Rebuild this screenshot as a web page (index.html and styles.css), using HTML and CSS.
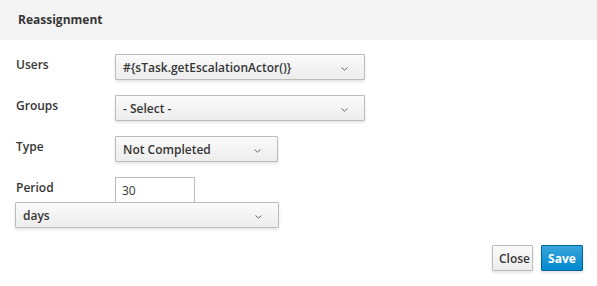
FILE: index.html
```html
<!DOCTYPE html>
<html lang="en">
<head>
    <meta charset="UTF-8">
    <meta name="viewport" content="width=device-width, initial-scale=1.0">
    <title>Reassignment</title>
    <link rel="stylesheet" href="styles.css">
</head>
<body>
    <div class="modal">
        <div class="modal-header">
            <h4 class="modal-title">Reassignment</h4>
        </div>

        <div class="modal-body">
            <div class="form-row">
                <label class="form-label">Users</label>
                <button class="select select-users">
                    <span>#{sTask.getEscalationActor()}</span>
                    <svg class="caret" width="7" height="4" viewBox="0 0 7 4"><path d="M0.5 0.5 L3.5 3.2 L6.5 0.5" fill="none" stroke="#666" stroke-width="1"/></svg>
                </button>
            </div>

            <div class="form-row">
                <label class="form-label">Groups</label>
                <button class="select select-users">
                    <span>- Select -</span>
                    <svg class="caret" width="7" height="4" viewBox="0 0 7 4"><path d="M0.5 0.5 L3.5 3.2 L6.5 0.5" fill="none" stroke="#666" stroke-width="1"/></svg>
                </button>
            </div>

            <div class="form-row">
                <label class="form-label">Type</label>
                <button class="select select-type">
                    <span>Not Completed</span>
                    <svg class="caret" width="7" height="4" viewBox="0 0 7 4"><path d="M0.5 0.5 L3.5 3.2 L6.5 0.5" fill="none" stroke="#666" stroke-width="1"/></svg>
                </button>
            </div>

            <div class="form-row period-row">
                <label class="form-label">Period</label>
                <input class="text-input" type="text" value="30">
            </div>
            <button class="select select-period">
                <span>days</span>
                <svg class="caret" width="7" height="4" viewBox="0 0 7 4"><path d="M0.5 0.5 L3.5 3.2 L6.5 0.5" fill="none" stroke="#666" stroke-width="1"/></svg>
            </button>
        </div>

        <div class="modal-footer">
            <button class="btn btn-default">Close</button>
            <button class="btn btn-primary">Save</button>
        </div>
    </div>
</body>
</html>
```

FILE: styles.css
```css
* {
    margin: 0;
    padding: 0;
    box-sizing: border-box;
}

body {
    font-family: 'Open Sans', 'Liberation Sans', sans-serif;
    font-size: 12px;
    color: #363636;
    background: #fff;
}

.modal {
    width: 597px;
    height: 286px;
    background: #fff;
}

.modal-header {
    height: 40px;
    background: #f4f4f4;
    padding: 11px 18px 0;
}

.modal-title {
    font-size: 12px;
    font-weight: 700;
    line-height: 18px;
    color: #363636;
}

.modal-body {
    padding: 14px 15px 0;
}

.form-row {
    display: flex;
    align-items: center;
    margin-bottom: 15px;
}

.form-label {
    width: 100px;
    padding-left: 1px;
    font-weight: 600;
    margin-top: -5px;
}

.select {
    display: flex;
    align-items: center;
    justify-content: space-between;
    height: 26px;
    padding: 0 16px 0 7px;
    border: 1px solid #bbb;
    border-radius: 1px;
    background: linear-gradient(to bottom, #fafafa 0%, #ededed 100%);
    box-shadow: 0 2px 3px rgba(3, 3, 3, 0.1);
    font-family: inherit;
    font-size: 12px;
    font-weight: 600;
    color: #363636;
    text-align: left;
}

.select-users {
    width: 250px;
}

.select-type {
    width: 163px;
}

.select-period {
    width: 264px;
    height: 26px;
}

.caret {
    margin-top: 3px;
}

.period-row {
    margin-bottom: 0;
    align-items: flex-start;
}

.period-row .form-label {
    margin-top: 2px;
}

.text-input {
    width: 80px;
    height: 25px;
    border: 1px solid #bbb;
    border-bottom: none;
    padding: 0 6px;
    font-family: inherit;
    font-size: 12px;
    color: #363636;
    outline: none;
}

.modal-footer {
    display: flex;
    justify-content: flex-end;
    gap: 8px;
    padding: 17px 14px 0;
}

.btn {
    height: 26px;
    padding: 0 6px;
    border: 1px solid #bbb;
    border-radius: 1px;
    font-family: inherit;
    font-size: 12px;
    font-weight: 600;
    box-shadow: 0 2px 3px rgba(3, 3, 3, 0.1);
}

.btn-default {
    width: 41px;
    color: #363636;
    background: linear-gradient(to bottom, #fafafa 0%, #ededed 100%);
}

.btn-primary {
    width: 42px;
    color: #fff;
    font-weight: 700;
    border-color: #00659c;
    background: linear-gradient(to bottom, #39a5dc 0%, #0088ce 100%);
}
```
